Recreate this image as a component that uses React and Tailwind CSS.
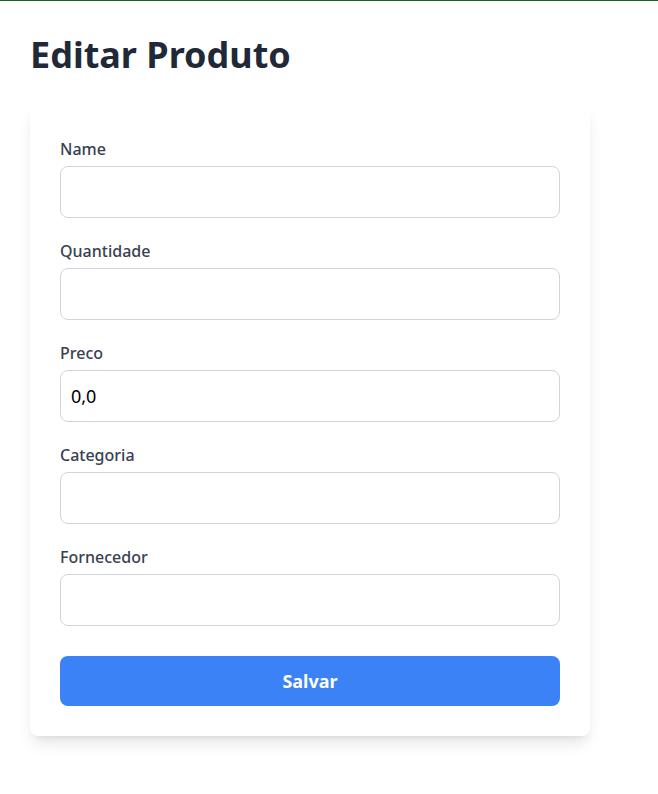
import React, { useState } from 'react';

const FIELDS = [
  { key: 'name', label: 'Name' },
  { key: 'quantidade', label: 'Quantidade' },
  { key: 'preco', label: 'Preco' },
  { key: 'categoria', label: 'Categoria' },
  { key: 'fornecedor', label: 'Fornecedor' },
];

export default function App() {
  const [form, setForm] = useState({ name: '', quantidade: '', preco: '0,0', categoria: '', fornecedor: '' });

  const handleChange = (key) => (e) => setForm({ ...form, [key]: e.target.value });

  return (
    <div className="min-h-screen bg-white border-t border-[#1b5e20] font-['Noto_Sans',sans-serif]">
      <div className="px-[30px] pt-[34px]">
        <h1 className="text-4xl leading-10 font-bold text-[#1f2937] mb-[29px]">Editar Produto</h1>

        {/* Form card */}
        <form
          className="w-[560px] bg-white rounded-lg shadow-lg px-[30px] pt-[33px] pb-[30px] flex flex-col"
          onSubmit={(e) => e.preventDefault()}
        >
          {FIELDS.map((f) => (
            <div key={f.key} className="flex flex-col mb-[21px]">
              <label className="h-6 mb-[5px] text-base leading-6 font-medium text-[#374151]">{f.label}</label>
              <input
                type="text"
                value={form[f.key]}
                onChange={handleChange(f.key)}
                className="h-[52px] w-full px-[10px] rounded-lg border border-[#d1d5db] text-lg text-black outline-none"
              />
            </div>
          ))}
          <button
            type="submit"
            className="mt-[9px] h-[50px] w-full rounded-lg bg-[#3b82f6] text-white text-lg font-bold"
          >
            Salvar
          </button>
        </form>
      </div>
    </div>
  );
}
